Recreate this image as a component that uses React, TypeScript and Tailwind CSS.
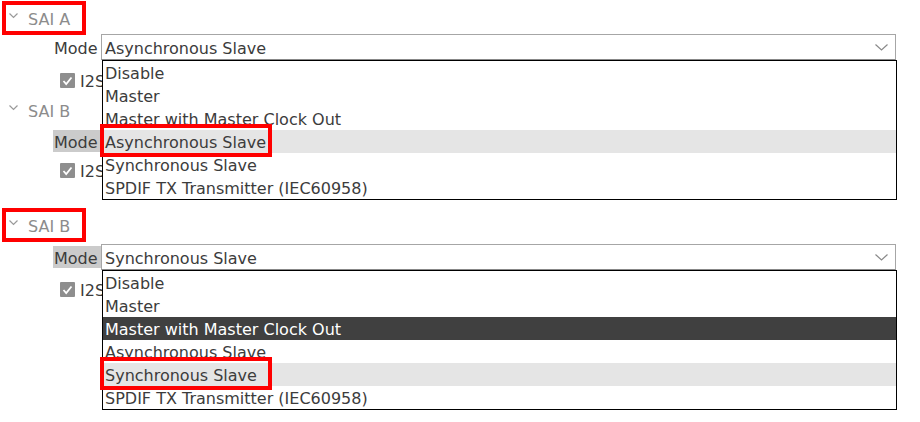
import React from 'react';

const OPTIONS = [
  'Disable',
  'Master',
  'Master with Master Clock Out',
  'Asynchronous Slave',
  'Synchronous Slave',
  'SPDIF TX Transmitter (IEC60958)',
];

const TreeChevron = () => (
  <svg width="9" height="6" viewBox="0 0 9 6" className="shrink-0 -mt-[4px]">
    <polyline points="0.5,0.5 4.5,4.5 8.5,0.5" fill="none" stroke="#9a9a9a" strokeWidth="1.2" />
  </svg>
);

const Header: React.FC<{ label: string; boxed?: boolean }> = ({ label, boxed }) => (
  <div
    className={
      boxed
        ? 'ml-[2px] w-[84px] h-[34px] border-4 border-[#ff0000] flex items-center pl-[3px] gap-[10px]'
        : 'ml-[2px] w-[84px] h-[34px] border-4 border-transparent flex items-center pl-[3px] gap-[10px]'
    }
  >
    <TreeChevron />
    <span className="text-[#8c8c8c] pt-[3px]">{label}</span>
  </div>
);

const Check = () => (
  <div className="flex items-center h-[15px] ml-[60px] gap-[5px]">
    <div className="w-[15px] h-[15px] bg-[#8e8e8e] rounded-[1px] flex items-center justify-center">
      <svg width="11" height="10" viewBox="0 0 11 10">
        <polyline points="1.5,5 4.2,8 9.5,1.5" fill="none" stroke="#ffffff" strokeWidth="1.8" />
      </svg>
    </div>
    <span className="text-[#3c3c3c] pt-[3px]">I2S</span>
  </div>
);

type ModeProps = {
  value: string;
  shaded?: boolean;
  open?: { hover: number; dark?: number; boxed: number };
};

const ModeRow: React.FC<ModeProps> = ({ value, shaded, open }) => (
  <div className="flex items-center h-[26px]">
    <div
      className={
        shaded
          ? 'ml-[53px] w-[48px] h-[22px] bg-[#cbcbcb] flex items-center pl-[1px] pt-[3px] text-[#3c3c3c]'
          : 'ml-[53px] w-[48px] h-[22px] flex items-center pl-[1px] pt-[3px] text-[#3c3c3c]'
      }
    >
      Mode
    </div>
    <div className="relative w-[795px] h-[26px] border border-[#a6a6a6] border-b-[#888888] bg-white flex items-center justify-between pl-[3px] pr-[7px]">
      <span className="text-[#3c3c3c] pt-[3px]">{value}</span>
      <svg width="13" height="7" viewBox="0 0 13 7">
        <polyline points="0.5,0.5 6.5,6 12.5,0.5" fill="none" stroke="#8a8a8a" strokeWidth="1.2" />
      </svg>
      {open && (
        <div className="absolute left-0 top-[25px] w-[795px] bg-white border border-black z-10">
          {OPTIONS.map((o, i) => {
            const dark = open.dark === i;
            const hover = open.hover === i;
            return (
              <div
                key={o}
                className={
                  dark
                    ? 'relative h-[23px] flex items-center pl-[2px] pt-[3px] bg-[#404040] text-white'
                    : hover
                    ? 'relative h-[23px] flex items-center pl-[2px] pt-[3px] bg-[#e5e5e5] text-[#3c3c3c]'
                    : 'relative h-[23px] flex items-center pl-[2px] pt-[3px] bg-white text-[#3c3c3c]'
                }
              >
                {o}
                {open.boxed === i && (
                  <div className="absolute z-10 left-[-3px] top-[-6px] w-[172px] h-[33px] border-4 border-[#ff0000]" />
                )}
              </div>
            );
          })}
        </div>
      )}
    </div>
  </div>
);

export default function App() {
  return (
    <div
      className="w-[920px] h-[422px] bg-white overflow-hidden pt-[1px] text-[16px] leading-none"
      style={{ fontFamily: '"DejaVu Sans", sans-serif' }}
    >
      <div className="relative">
        <Header label="SAI A" boxed />
        <div className="-mt-[1px] relative z-20">
          <ModeRow value="Asynchronous Slave" open={{ hover: 3, boxed: 3 }} />
        </div>
        <div className="mt-[13px]">
          <Check />
        </div>
        <div className="mt-[5px]">
          <Header label="SAI B" />
        </div>
        <div className="mt-[1px]">
          <ModeRow value="Synchronous Slave" shaded />
        </div>
        <div className="mt-[9px]">
          <Check />
        </div>
      </div>
      <div className="relative mt-[30px]">
        <Header label="SAI B" boxed />
        <div className="mt-[2px]">
          <ModeRow value="Synchronous Slave" shaded open={{ hover: 4, dark: 2, boxed: 4 }} />
        </div>
        <div className="mt-[12px]">
          <Check />
        </div>
      </div>
    </div>
  );
}
